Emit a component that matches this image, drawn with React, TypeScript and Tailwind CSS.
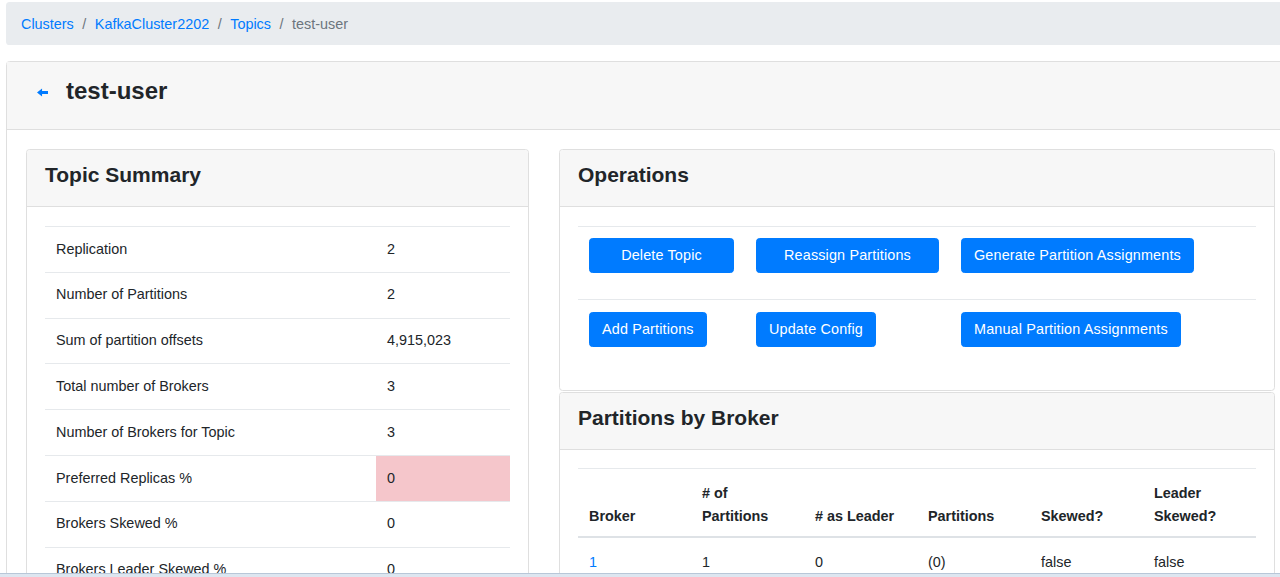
import React from 'react';

const summaryRows: { label: string; value: string; danger?: boolean }[] = [
  { label: 'Replication', value: '2' },
  { label: 'Number of Partitions', value: '2' },
  { label: 'Sum of partition offsets', value: '4,915,023' },
  { label: 'Total number of Brokers', value: '3' },
  { label: 'Number of Brokers for Topic', value: '3' },
  { label: 'Preferred Replicas %', value: '0', danger: true },
  { label: 'Brokers Skewed %', value: '0' },
  { label: 'Brokers Leader Skewed %', value: '0' },
];

const brokerHeaders: string[][] = [
  ['Broker'],
  ['# of', 'Partitions'],
  ['# as Leader'],
  ['Partitions'],
  ['Skewed?'],
  ['Leader', 'Skewed?'],
];

const brokerRow = ['1', '1', '0', '(0)', 'false', 'false'];

const CardHeader: React.FC<{ title: string }> = ({ title }) => (
  <div className="h-[57px] flex items-center px-[18px] pb-[7px] bg-[#f7f7f7] border-b border-[#dfdfdf] rounded-t-[3.6px]">
    <h4 className="text-[21px] font-semibold text-[#212529] leading-none">{title}</h4>
  </div>
);

const Btn: React.FC<{ label: string; block?: boolean }> = ({ label, block }) => (
  <button
    className={
      'h-[35px] px-[12px] bg-[#007bff] text-white text-[14.4px] rounded-[3.6px] border border-[#007bff] text-center tracking-[0.15px] ' +
      (block ? 'w-full' : '')
    }
  >
    {label}
  </button>
);

const Sep = () => <span className="px-[8.5px] text-[#6c757d]">/</span>;

const App: React.FC = () => {
  return (
    <div
      className="w-[1280px] h-[577px] overflow-hidden bg-white text-[#212529] text-[14.4px] leading-[21.6px]"
      style={{ fontFamily: '"Liberation Sans", Arial, sans-serif' }}
    >
      <div className="w-[1300px] pl-[6px] pt-[2px]">
        {/* breadcrumb */}
        <nav className="w-[1288px] h-[43px] bg-[#e9ecef] rounded-[3.6px] flex items-center px-[15px] pt-[3px]">
          <a className="text-[#007bff]">Clusters</a>
          <Sep />
          <a className="text-[#007bff]">KafkaCluster2202</a>
          <Sep />
          <a className="text-[#007bff]">Topics</a>
          <Sep />
          <span className="text-[#6c757d]">test-user</span>
        </nav>

        {/* topic card */}
        <div className="mt-[16px] w-[1288px] border border-[#dfdfdf] rounded-[3.6px]">
          <div className="h-[68px] bg-[#f7f7f7] border-b border-[#dfdfdf] flex items-center pl-[30px] pb-[10px]">
            <svg width="11" height="9" viewBox="0 0 10 8" className="mr-[18px] mt-[4px]">
              <path d="M0 4 L4.6 0.4 L4.6 2.7 L10 2.7 L10 5.3 L4.6 5.3 L4.6 7.6 Z" fill="#007bff" />
            </svg>
            <h3 className="text-[24px] font-bold leading-none text-[#212529]">test-user</h3>
          </div>

          <div className="p-[19px] flex gap-[30px]">
            {/* Topic Summary */}
            <div className="w-[503px] border border-[#dfdfdf] rounded-[3.6px] shrink-0">
              <CardHeader title="Topic Summary" />
              <div className="px-[18px] pt-[19px] pb-[18px]">
                <table className="w-full border-collapse">
                  <tbody>
                    {summaryRows.map((r) => (
                      <tr key={r.label} className="h-[45.8px] border-t border-[#e6e9ec]">
                        <td className="px-[11px] w-[331px]">{r.label}</td>
                        <td className={'px-[11px] ' + (r.danger ? 'bg-[#f5c6cb]' : '')}>{r.value}</td>
                      </tr>
                    ))}
                  </tbody>
                </table>
              </div>
            </div>

            {/* right column */}
            <div className="w-[716px] shrink-0 flex flex-col gap-[1px]">
              <div className="border border-[#dfdfdf] rounded-[3.6px]">
                <CardHeader title="Operations" />
                <div className="px-[18px] pt-[19px] pb-[17px]">
                  <table className="w-full border-collapse">
                    <tbody>
                      <tr className="h-[73px] border-t border-[#e6e9ec] align-top">
                        <td className="w-[167px] px-[11px] pt-[11px]">
                          <Btn label="Delete Topic" block />
                        </td>
                        <td className="w-[205px] px-[11px] pt-[11px]">
                          <Btn label="Reassign Partitions" block />
                        </td>
                        <td className="px-[11px] pt-[11px]">
                          <Btn label="Generate Partition Assignments" />
                        </td>
                      </tr>
                      <tr className="h-[73px] border-t border-[#e6e9ec] align-top">
                        <td className="px-[11px] pt-[12px]">
                          <Btn label="Add Partitions" />
                        </td>
                        <td className="px-[11px] pt-[12px]">
                          <Btn label="Update Config" />
                        </td>
                        <td className="px-[11px] pt-[12px]">
                          <Btn label="Manual Partition Assignments" />
                        </td>
                      </tr>
                    </tbody>
                  </table>
                </div>
              </div>

              <div className="border border-[#dfdfdf] rounded-[3.6px]">
                <CardHeader title="Partitions by Broker" />
                <div className="px-[18px] pt-[18px] pb-[18px]">
                  <table className="w-full border-collapse table-fixed">
                    <thead>
                      <tr className="border-t border-[#e6e9ec] border-b-2 border-b-[#dee2e6]">
                        {brokerHeaders.map((h, i) => (
                          <th key={i} className="px-[11px] pt-[13px] pb-[8px] text-left font-bold align-bottom leading-[23px]">
                            {h.map((line) => (
                              <div key={line}>{line}</div>
                            ))}
                          </th>
                        ))}
                      </tr>
                    </thead>
                    <tbody>
                      <tr className="h-[48px] align-top">
                        {brokerRow.map((v, i) => (
                          <td key={i} className={'px-[11px] pt-[14px] ' + (i === 0 ? 'text-[#007bff]' : '')}>
                            {v}
                          </td>
                        ))}
                      </tr>
                    </tbody>
                  </table>
                </div>
              </div>
            </div>
          </div>
        </div>
      </div>

      {/* window edge strip */}
      <div className="fixed left-0 bottom-0 w-[1280px] h-[4px] bg-[#dde6f0] border-t border-[#b8c7d8]" />
    </div>
  );
};

export default App;
